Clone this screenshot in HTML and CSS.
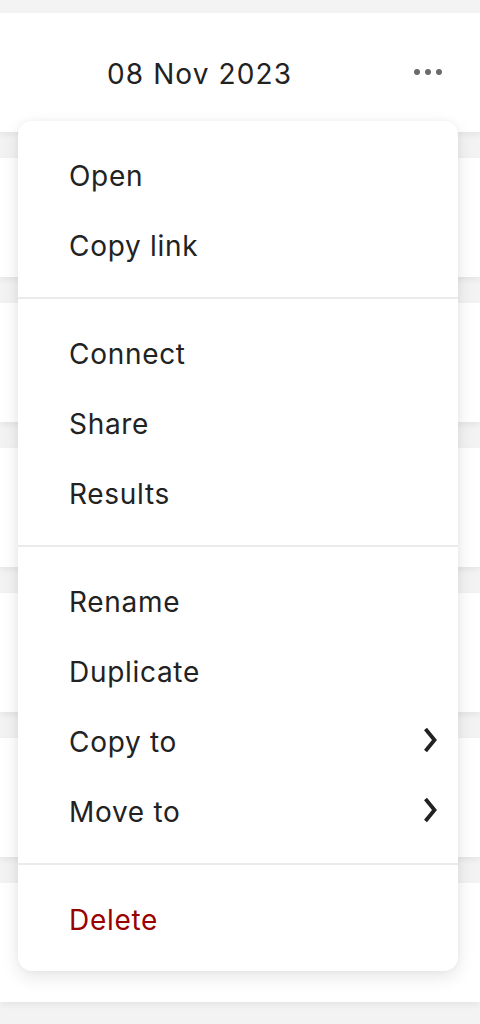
FILE: index.html
```html
<!DOCTYPE html>
<html lang="en">
<head>
<meta charset="utf-8">
<title>Menu</title>
<link rel="stylesheet" href="styles.css">
</head>
<body>
<div class="list">
  <div class="row">
    <span class="date">08 Nov 2023</span>
    <span class="more" aria-label="More"><i></i><i></i><i></i></span>
  </div>
  <div class="row"></div>
  <div class="row"></div>
  <div class="row"></div>
  <div class="row"></div>
  <div class="row"></div>
  <div class="row"></div>
</div>

<div class="menu">
  <div class="section">
    <div class="item">Open</div>
    <div class="item">Copy link</div>
  </div>
  <div class="section">
    <div class="item">Connect</div>
    <div class="item">Share</div>
    <div class="item">Results</div>
  </div>
  <div class="section">
    <div class="item">Rename</div>
    <div class="item">Duplicate</div>
    <div class="item"><span>Copy to</span>
      <svg class="chev" width="16" height="28" viewBox="0 0 16 28"><path d="M3.5 3 L12.5 14 L3.5 25" fill="none" stroke="#222" stroke-width="3.8" stroke-linejoin="miter"/></svg>
    </div>
    <div class="item"><span>Move to</span>
      <svg class="chev" width="16" height="28" viewBox="0 0 16 28"><path d="M3.5 3 L12.5 14 L3.5 25" fill="none" stroke="#222" stroke-width="3.8" stroke-linejoin="miter"/></svg>
    </div>
  </div>
  <div class="section">
    <div class="item danger">Delete</div>
  </div>
</div>
</body>
</html>
```
FILE: styles.css
```css
html, body {
  margin: 0;
  padding: 0;
}
body {
  background: #f3f3f3;
  font-family: Inter, "Liberation Sans", sans-serif;
  color: #222;
  width: 480px;
  height: 1024px;
  overflow: hidden;
  position: relative;
}
.list {
  display: flex;
  flex-direction: column;
  gap: 26px;
  padding-top: 13px;
}
.row {
  height: 119px;
  background: #fff;
  box-shadow: 0 3px 6px rgba(0, 0, 0, 0.06);
  display: flex;
  align-items: center;
  padding: 0 38px 0 107px;
}
.date {
  font-size: 28px;
  letter-spacing: 1.1px;
  flex: 1;
  padding-top: 3px;
}
.more {
  display: flex;
  gap: 5px;
  padding-bottom: 2px;
}
.more i {
  width: 6px;
  height: 6px;
  border-radius: 50%;
  background: #6b6b6b;
}
.menu {
  position: absolute;
  top: 121px;
  left: 18px;
  width: 440px;
  background: #fff;
  border-radius: 14px;
  box-shadow: 0 6px 18px rgba(0, 0, 0, 0.10), 0 0 6px rgba(0, 0, 0, 0.04);
  overflow: hidden;
}
.section {
  padding: 18px 0;
  border-top: 2px solid #ebebeb;
}
.section:first-child {
  border-top: none;
}
.item {
  height: 70px;
  box-sizing: border-box;
  display: flex;
  align-items: center;
  justify-content: space-between;
  padding: 3px 20px 0 51px;
  font-size: 28px;
  letter-spacing: 0.7px;
}
.danger {
  color: #990000;
}
.chev {
  display: block;
  flex-shrink: 0;
  margin-top: -3px;
}
```
